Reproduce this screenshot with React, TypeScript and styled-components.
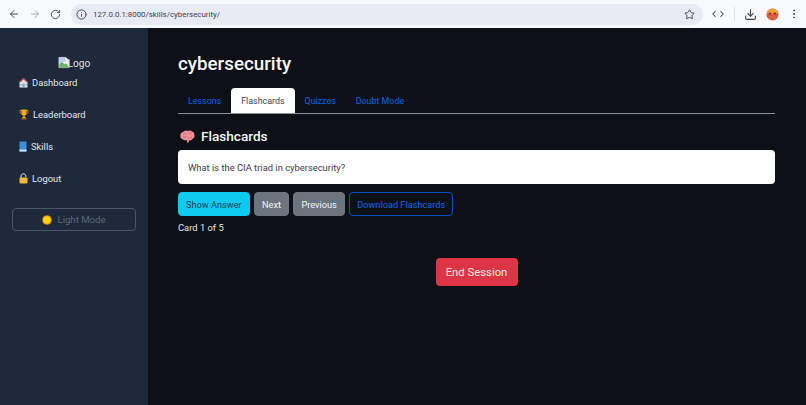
import React from "react";
import styled, { createGlobalStyle } from "styled-components";
import { ArrowLeft, ArrowRight, RotateCw, Info, Star, ChevronLeft, ChevronRight, Download, EllipsisVertical } from "lucide-react";

const Global = createGlobalStyle`
  html, body { margin: 0; padding: 0; width: 806px; height: 405px; overflow: hidden; background: #0d1117; }
  * { box-sizing: border-box; }
  body { font-family: Roboto, "Noto Sans", sans-serif; }
`;
const Page = styled.div`display: flex; flex-direction: column; width: 806px; height: 405px;`;
const Chrome = styled.header`
  height: 28px; flex: none; background: #f8f9fd; display: flex; align-items: center; padding: 0 0 0 3px; color: #4a4d52;
`;
const NavIcon = styled.span<{ $dim?: boolean }>`
  width: 21px; display: flex; justify-content: center; color: ${p => p.$dim ? "#a9abb0" : "#44474c"};
`;
const Omnibox = styled.div`
  margin-left: 5px; width: 632px; height: 21px; border-radius: 11px; background: #e8ebf4; display: flex; align-items: center; padding: 0 8px 0 5px; color: #3f4247;
`;
const Url = styled.span`font: 7.9px Roboto, sans-serif; margin-left: 6px; flex: 1; color: #3f4247;`;
const ToolGroup = styled.div`display: flex; align-items: center; margin-left: 4px; color: #3f4247;`;
const ToolIcon = styled.span`width: 22px; display: flex; justify-content: center;`;
const Divider = styled.span`width: 1px; height: 14px; background: #dfe1e6; margin: 0 4px 0 5px;`;
const Body = styled.div`flex: 1; display: flex; min-height: 0;`;
const Sidebar = styled.aside`
  width: 148px; flex: none; background: #1e293b; padding: 27px 12px 0; display: flex; flex-direction: column;
`;
const LogoWrap = styled.div`display: flex; justify-content: center; align-items: flex-start; height: 15px; color: #d9dee6; font-size: 10.2px; line-height: 15px; padding-top: 1px;`;
const LogoIcon = styled.span`display: flex; width: 10px; overflow: visible;`;
const Menu = styled.nav`display: flex; flex-direction: column; margin-top: -3px;`;
const MenuItem = styled.a`
  height: 31.8px; display: flex; align-items: center; gap: 4px; padding-left: 7px; color: #e3e7ee; font-size: 9.4px; white-space: nowrap;
`;
const ThemeButton = styled.button`
  margin-top: 14px; width: 124px; height: 23px; background: transparent; border: 1px solid #4b5563; border-radius: 4px; color: #5d6877;
  display: flex; align-items: center; justify-content: center; gap: 5px; font: 9.6px Roboto, sans-serif; padding: 0;
`;
const Main = styled.main`flex: 1; background: #0d1117; padding: 23px 31px 0 30px; color: #fff;`;
const Title = styled.h1`margin: 0; font-size: 18.8px; line-height: 27px; font-weight: 500; color: #f4f6f8;`;
const Tabs = styled.div`margin-top: 10px; height: 26px; display: flex; border-bottom: 1px solid #8a9097;`;
const Tab = styled.a<{ $active?: boolean }>`
  height: 25px; padding: 0 10px; display: flex; align-items: center; font-size: 8.9px; border-radius: 4px 4px 0 0;
  color: ${p => p.$active ? "#3c4248" : "#0f62e6"}; background: ${p => p.$active ? "#fff" : "transparent"};
`;
const SectionTitle = styled.h2`
  margin: 13px 0 0; display: flex; align-items: center; gap: 6px; padding-left: 2px; font-size: 13.6px; line-height: 19px; font-weight: 500; color: #f4f6f8;
`;
const Card = styled.div`
  margin-top: 4px; height: 34px; background: #fff; border-radius: 4px; padding: 0 10px; display: flex; align-items: center; font-size: 9.4px; color: #3b4046;
`;
const Actions = styled.div`margin-top: 8px; display: flex; gap: 4.4px;`;
const Btn = styled.button<{ $bg?: string; $fg: string; $border?: string }>`
  height: 24px; padding: 0 7px; border-radius: 4px; font: 9.2px Roboto, sans-serif; white-space: nowrap;
  background: ${p => p.$bg ?? "transparent"}; color: ${p => p.$fg}; border: 1px solid ${p => p.$border ?? p.$bg ?? "transparent"};
`;
const Counter = styled.p`margin: 5px 0 0; font-size: 9.4px; line-height: 14px; color: #e3e6ea;`;
const EndRow = styled.div`margin-top: 23px; display: flex; justify-content: center;`;
const EndBtn = styled.button`
  width: 82px; height: 28px; border: 0; border-radius: 4px; background: #dc3545; color: #fbe9eb; font: 11.3px Roboto, sans-serif; padding: 0;
`;

const Broken = () => (
  <svg width="12" height="13" viewBox="0 0 14 14" style={{ flex: "none" }}>
    <path d="M1 1h8l4 4v8H1z" fill="#f1f3f5" stroke="#b7bcc2" strokeWidth=".7" />
    <path d="M1.500 9l3-3 3 3 1.500-1 3.500 3v2h-11z" fill="#6fb36a" />
    <path d="M1.500 1.500h7v5l-4-.5-3 3z" fill="#b6cdf5" />
    <path d="M9 1l4 4H9z" fill="#fff" stroke="#b7bcc2" strokeWidth=".5" />
  </svg>
);
const House = () => (
  <svg width="9" height="11" viewBox="0 0 9 11">
    <path d="M4.500 1L0.500 5v5.500h8V5z" fill="#e7e3df" />
    <path d="M4.500 .8L0 5l.8.7 3.700-3.300 3.700 3.300.8-.7z" fill="#b5454c" />
    <path d="M3.300 6.500h2.400v4H3.300z" fill="#7fa7d0" />
    <path d="M1 7h1.500v1.500H1zM6.500 7H8v1.500H6.500z" fill="#77b7d8" />
  </svg>
);
const Trophy = () => (
  <svg width="10" height="11" viewBox="0 0 10 11">
    <path d="M1 1.500h8v1.400C9 4.300 8 5 7 5H3C2 5 1 4.300 1 2.900z" fill="none" stroke="#d98a12" strokeWidth="1" />
    <path d="M2.500 .6h5V4c0 1.600-1 2.600-1.900 2.800V8h1.200v1H3.200V8h1.200V6.800C3.500 6.600 2.500 5.600 2.500 4z" fill="#f0a81c" />
    <path d="M2.600 9.200h4.800v1.200H2.600z" fill="#b97512" />
  </svg>
);
const Book = () => (
  <svg width="8" height="11" viewBox="0 0 8 11">
    <rect x="0.5" y="0.5" width="7" height="10" rx=".8" fill="#3d8fdc" />
    <path d="M.5 8.600h7v1.900h-7z" fill="#d6e8f7" />
  </svg>
);
const Lock = () => (
  <svg width="9" height="11" viewBox="0 0 9 11">
    <path d="M2 5V3.200C2 1.800 3 .8 4.400 .8c1.400 0 2.400 1 2.400 2.400V4" fill="none" stroke="#e9edf1" strokeWidth="1" />
    <rect x="0.5" y="4.600" width="8" height="6" rx="1" fill="#f2b93b" />
  </svg>
);
const Sun = () => (
  <svg width="10" height="10" viewBox="0 0 10 10">
    <circle cx="5" cy="5" r="4.800" fill="#d98a12" />
    <circle cx="5" cy="5" r="3.700" fill="#ffd60a" />
  </svg>
);
const Brain = () => (
  <svg width="15" height="13" viewBox="0 0 15 13">
    <path d="M4 1.200C5.500 0 7 .4 7.800 1 9.400 0 11 .4 12 1.600c1.600.4 2.600 1.800 2.400 3.400.5 1.500-.2 3-1.600 3.600-.6 1.500-2.200 2.200-3.600 1.600-.2.9-.5 1.800-.7 2.400-.7.2-1.400.1-1.600-.3l.2-2.200C5.500 10.500 3.600 10.300 2.700 9.200 1.100 8.900 0 7.600.4 5.800.1 4.200 1 2.600 2.400 2.300 2.800 1.800 3.300 1.400 4 1.200z" fill="#ef8f9c" />
    <path d="M3 4c1.500-1 3-.5 4 .5M8 3c1.500-.5 3 0 4 1M3 7c1.500.5 3 .2 4-.5M8.500 8c1.200.3 2.500 0 3.500-1" fill="none" stroke="#cf5f72" strokeWidth=".7" />
  </svg>
);
const Avatar = () => (
  <svg width="13" height="13" viewBox="0 0 14 14">
    <circle cx="7" cy="7" r="6.500" fill="#d9603f" />
    <path d="M1 6c.4-3 3-5.500 6-5.500S12.600 3 13 6z" fill="#eda03c" />
    <path d="M2.500 5.500c1-1 2.700-1 3.500 0L4.500 7.500zM8 5.500c1-1 2.700-1 3.500 0L9.500 7.500z" fill="#8a2a2a" />
  </svg>
);

export default function App() {
  return (
    <Page>
      <Global />
      <Chrome>
        <NavIcon><ArrowLeft size={12} /></NavIcon>
        <NavIcon $dim><ArrowRight size={12} /></NavIcon>
        <NavIcon><RotateCw size={11} /></NavIcon>
        <Omnibox>
          <Info size={11} />
          <Url>127.0.0.1:8000/skills/cybersecurity/</Url>
          <Star size={11} />
        </Omnibox>
        <ToolGroup>
          <ToolIcon><ChevronLeft size={10} strokeWidth={2.5} style={{ marginRight: -1 }} /><ChevronRight size={10} strokeWidth={2.5} style={{ marginLeft: -1 }} /></ToolIcon>
          <Divider />
          <ToolIcon><Download size={13} /></ToolIcon>
          <ToolIcon><Avatar /></ToolIcon>
          <ToolIcon><EllipsisVertical size={12} /></ToolIcon>
        </ToolGroup>
      </Chrome>
      <Body>
        <Sidebar>
          <LogoWrap><LogoIcon><Broken /></LogoIcon>Logo</LogoWrap>
          <Menu>
            <MenuItem><House />Dashboard</MenuItem>
            <MenuItem><Trophy />Leaderboard</MenuItem>
            <MenuItem><Book />Skills</MenuItem>
            <MenuItem><Lock />Logout</MenuItem>
          </Menu>
          <ThemeButton><Sun />Light Mode</ThemeButton>
        </Sidebar>
        <Main>
          <Title>cybersecurity</Title>
          <Tabs>
            <Tab>Lessons</Tab>
            <Tab $active>Flashcards</Tab>
            <Tab>Quizzes</Tab>
            <Tab>Doubt Mode</Tab>
          </Tabs>
          <SectionTitle><Brain />Flashcards</SectionTitle>
          <Card>What is the CIA triad in cybersecurity?</Card>
          <Actions>
            <Btn $bg="#0dcaf0" $fg="#0b3f52">Show Answer</Btn>
            <Btn $bg="#6c757d" $fg="#f3f4f5">Next</Btn>
            <Btn $bg="#6c757d" $fg="#f3f4f5">Previous</Btn>
            <Btn $fg="#0f62e6" $border="#0b4fc4">Download Flashcards</Btn>
          </Actions>
          <Counter>Card 1 of 5</Counter>
          <EndRow><EndBtn>End Session</EndBtn></EndRow>
        </Main>
      </Body>
    </Page>
  );
}
